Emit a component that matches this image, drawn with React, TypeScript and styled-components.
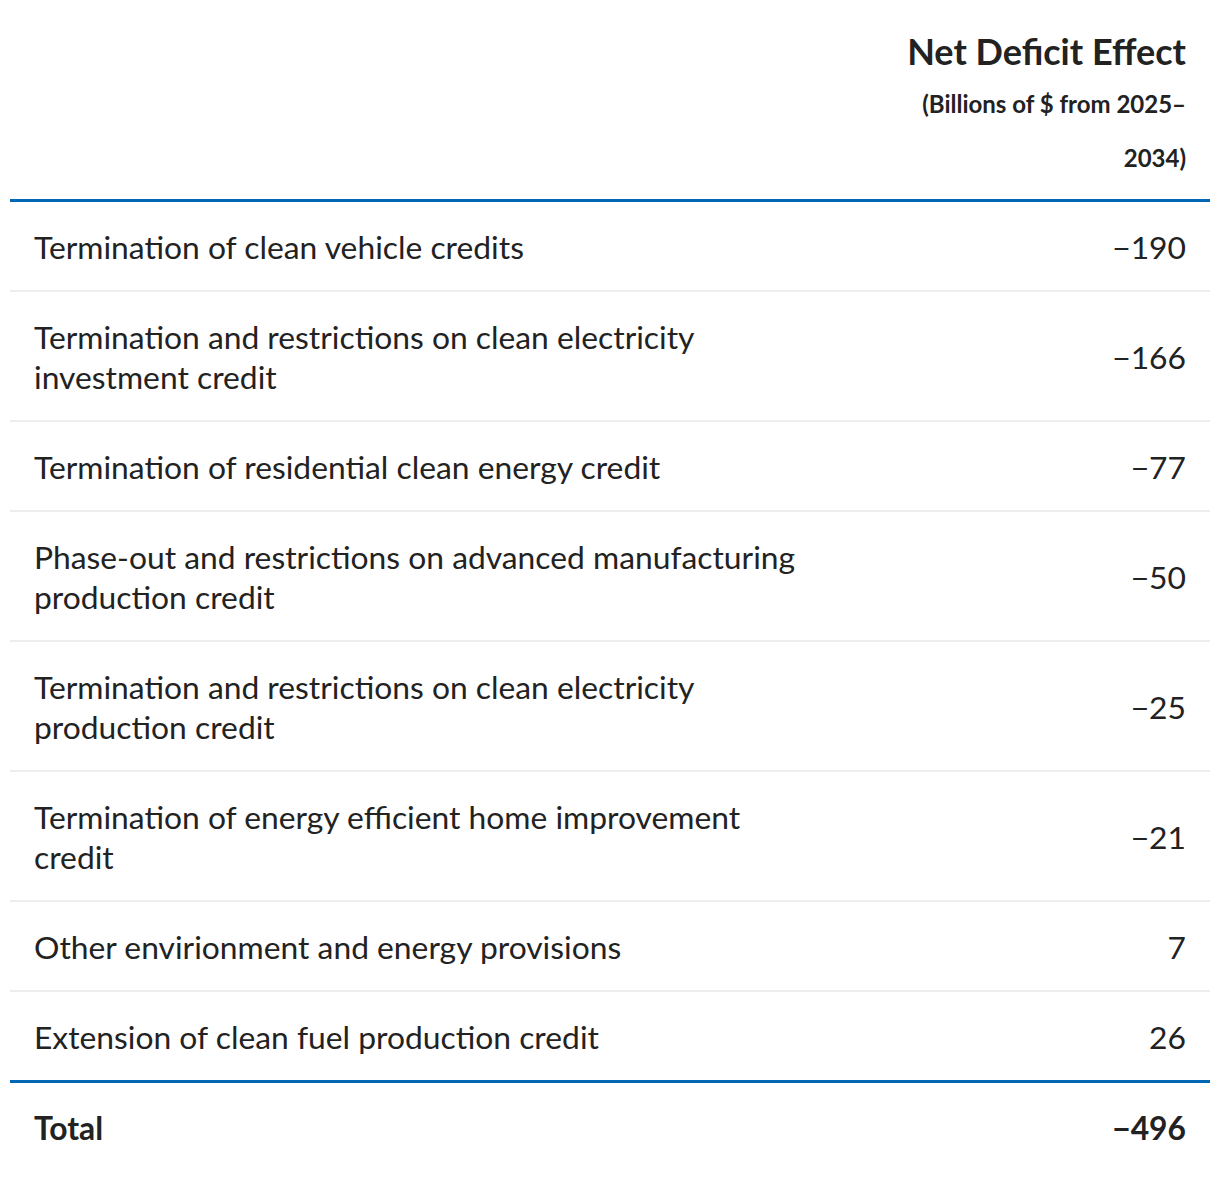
import styled, { createGlobalStyle } from "styled-components";

const GlobalStyle = createGlobalStyle`
  html, body {
    margin: 0;
    padding: 0;
    background: #fff;
  }
  body {
    font-family: Lato, "Liberation Sans", sans-serif;
    color: #222;
  }
`;

const Wrapper = styled.div`
  padding: 0 10px;
`;

const Table = styled.table`
  width: 100%;
  table-layout: fixed;
  border-collapse: separate;
  border-spacing: 0;
`;

const HeadCell = styled.th`
  padding: 31px 24px 14px;
  border-bottom: 3px solid #0068b3;
  text-align: right;
  vertical-align: bottom;
  font-weight: 700;
`;

const Title = styled.div`
  font-size: 36px;
  line-height: 40px;
  margin-bottom: 6px;
`;

const Subtitle = styled.div`
  font-size: 24px;
  line-height: 54px;
`;

const Cell = styled.td<{ $num?: boolean; $last?: boolean }>`
  padding: 25px 24px 23px;
  font-size: 31.8px;
  line-height: 40px;
  text-align: ${(p) => (p.$num ? "right" : "left")};
  border-bottom: ${(p) => (p.$last ? "none" : "2px solid #eee")};
  vertical-align: middle;
`;

const TotalCell = styled.td<{ $num?: boolean }>`
  padding: 25px 24px 23px;
  font-size: 31.8px;
  line-height: 40px;
  font-weight: 700;
  text-align: ${(p) => (p.$num ? "right" : "left")};
  border-top: 3px solid #0068b3;
`;

const rows: [string, string][] = [
  ["Termination of clean vehicle credits", "−190"],
  ["Termination and restrictions on clean electricity investment credit", "−166"],
  ["Termination of residential clean energy credit", "−77"],
  ["Phase-out and restrictions on advanced manufacturing production credit", "−50"],
  ["Termination and restrictions on clean electricity production credit", "−25"],
  ["Termination of energy efficient home improvement credit", "−21"],
  ["Other envirionment and energy provisions", "7"],
  ["Extension of clean fuel production credit", "26"],
];

export default function App() {
  return (
    <Wrapper>
      <GlobalStyle />
      <Table>
        <colgroup>
          <col style={{ width: "834px" }} />
          <col />
        </colgroup>
        <thead>
          <tr>
            <HeadCell />
            <HeadCell>
              <Title>Net Deficit Effect</Title>
              <Subtitle>(Billions of $ from 2025–2034)</Subtitle>
            </HeadCell>
          </tr>
        </thead>
        <tbody>
          {rows.map(([label, value], i) => (
            <tr key={label}>
              <Cell $last={i === rows.length - 1}>{label}</Cell>
              <Cell $num $last={i === rows.length - 1}>
                {value}
              </Cell>
            </tr>
          ))}
        </tbody>
        <tfoot>
          <tr>
            <TotalCell>Total</TotalCell>
            <TotalCell $num>−496</TotalCell>
          </tr>
        </tfoot>
      </Table>
    </Wrapper>
  );
}
